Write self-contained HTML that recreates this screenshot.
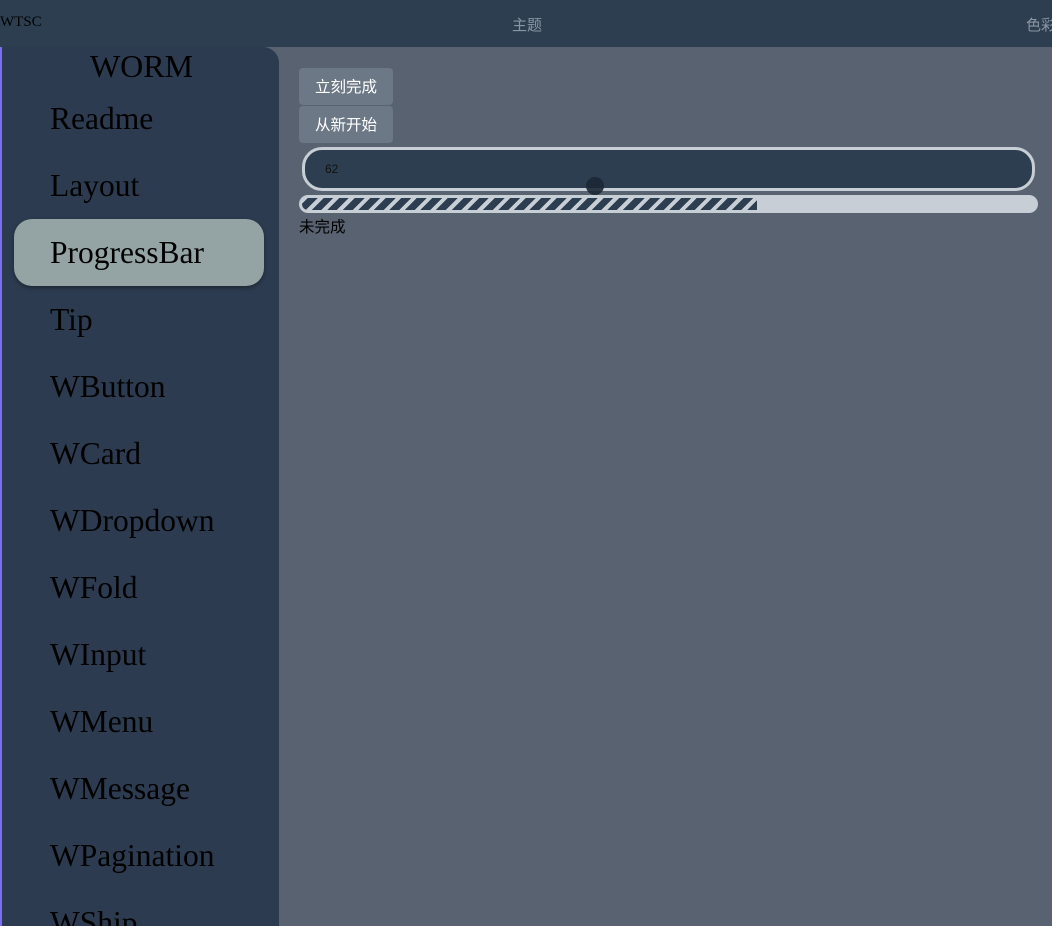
<!DOCTYPE html>
<html><head><meta charset="utf-8"><style>
*{box-sizing:border-box;margin:0;padding:0}
html,body{width:1052px;height:926px;overflow:hidden}
body{background:#596271;font-family:"Liberation Sans","Noto Sans CJK SC",sans-serif;position:relative}
.hdr{position:absolute;left:0;top:0;width:1052px;height:47px;background:#2c3e50}
.hdr span{position:absolute;top:14px;font-size:14px;color:#8a96a3;white-space:nowrap}
.side{position:absolute;left:0;top:47px;width:279px;height:879px;background:#2c3b4f;border-top-right-radius:16px;border-left:2px solid #7b6cf0;overflow:hidden}
.side .t{position:absolute;left:0;width:279px;top:1px;text-align:center;font:32px "Liberation Serif",serif;color:#000}
.item{position:absolute;left:48px;font:31.5px "Liberation Serif",serif;color:#000;line-height:40px;white-space:nowrap}
.act{position:absolute;left:12px;top:172px;width:250px;height:67px;background:#94a3a3;border-radius:18px;box-shadow:0 2px 4px rgba(0,0,0,.35)}
.btn{position:absolute;left:299px;width:94px;height:37px;background:#6c7885;border-radius:4px;color:#fff;font-size:15.5px;text-align:center;line-height:39px}
.inp{position:absolute;left:302px;top:147px;width:733px;height:44px;border:3px solid #c8ced6;border-radius:20px;background:#2c3e50;font-size:12px;color:#111;padding:12px 0 0 20px}
.dot{position:absolute;left:586px;top:177px;width:18px;height:18px;border-radius:50%;background:#1c2735;opacity:.9}
.bar{position:absolute;left:299px;top:195px;width:739px;height:18px;background:#c8ced6;border-radius:9px;padding:3px}
.fill{height:12px;width:455px;border-radius:6px 0 0 6px;background:repeating-linear-gradient(-45deg,#2c3e50 0 7px,#c8ced6 7px 11px)}
</style></head><body>
<div class="hdr"><span style="left:0;color:#000;font-family:'Liberation Serif',serif;font-size:15px">WTSC</span><span style="left:512px;font-size:15px">主题</span><span style="left:1026px;font-size:15px">色彩</span></div>
<div class="side">
<div class="t">WORM</div>
<div class="act"></div>
<div class="item" style="top:52px">Readme</div>
<div class="item" style="top:119px">Layout</div>
<div class="item" style="top:186px">ProgressBar</div>
<div class="item" style="top:253px">Tip</div>
<div class="item" style="top:320px">WButton</div>
<div class="item" style="top:387px">WCard</div>
<div class="item" style="top:454px">WDropdown</div>
<div class="item" style="top:521px">WFold</div>
<div class="item" style="top:588px">WInput</div>
<div class="item" style="top:655px">WMenu</div>
<div class="item" style="top:722px">WMessage</div>
<div class="item" style="top:789px">WPagination</div>
<div class="item" style="top:856px">WShip</div>
</div>
<div class="btn" style="top:68px">立刻完成</div>
<div class="btn" style="top:106px">从新开始</div>
<div class="inp">62</div>
<div class="dot"></div>
<div class="bar"><div class="fill"></div></div>
<div style="position:absolute;left:299px;top:215px;font-size:15.5px;color:#000">未完成</div>
</body></html>
